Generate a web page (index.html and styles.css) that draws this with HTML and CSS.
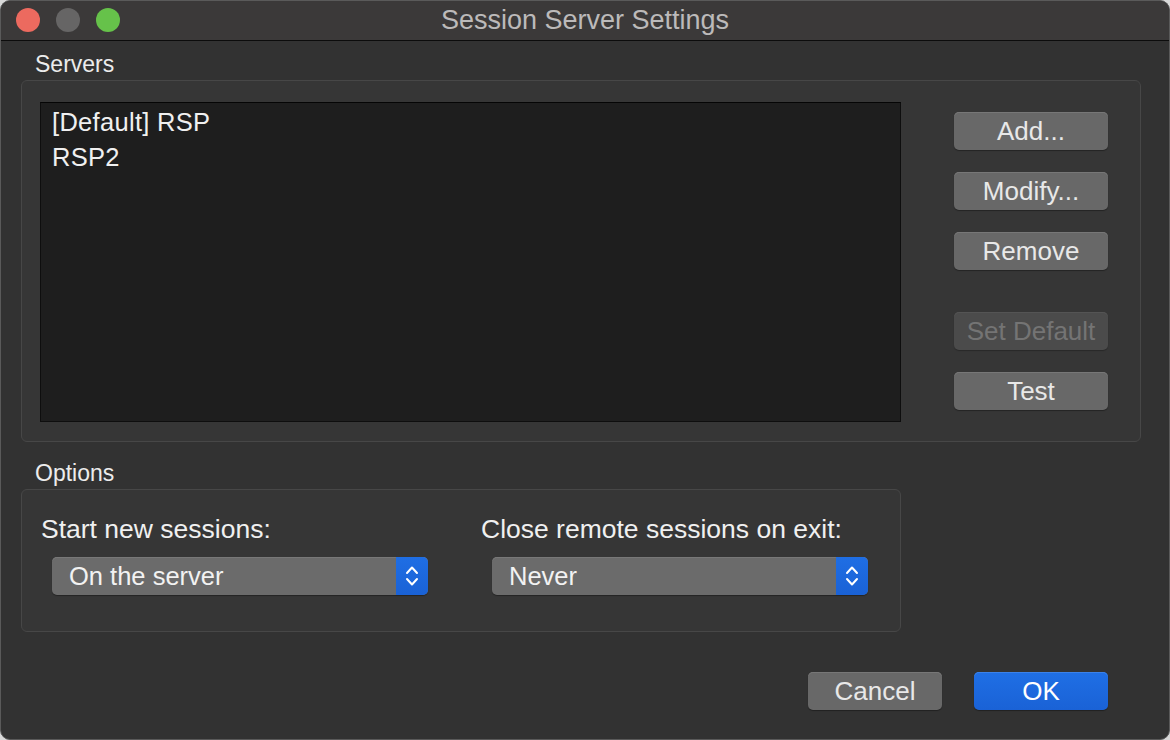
FILE: index.html
```html
<!DOCTYPE html>
<html>
<head>
<meta charset="utf-8">
<title>Session Server Settings</title>
<link rel="stylesheet" href="styles.css">
</head>
<body>
<div class="window">
  <div class="titlebar">
    <div class="lights">
      <span class="light red"></span>
      <span class="light grey"></span>
      <span class="light green"></span>
    </div>
    <div class="title">Session Server Settings</div>
    <div></div>
  </div>
  <div class="content">
    <div class="group-label servers-label">Servers</div>
    <div class="group servers">
      <div class="list">
        <div class="row">[Default] RSP</div>
        <div class="row">RSP2</div>
      </div>
      <div class="side-buttons">
        <button class="btn">Add...</button>
        <button class="btn">Modify...</button>
        <button class="btn">Remove</button>
        <button class="btn disabled spaced">Set Default</button>
        <button class="btn">Test</button>
      </div>
    </div>
    <div class="group-label options-label">Options</div>
    <div class="group options">
      <div class="field">
        <div class="field-label">Start new sessions:</div>
        <div class="select">
          <span class="select-text">On the server</span>
          <span class="select-arrows">
            <svg width="14" height="24" viewBox="0 0 14 24"><path d="M2 9 L7 3.5 L12 9 M2 15 L7 20.5 L12 15" fill="none" stroke="#ffffff" stroke-width="2" stroke-linecap="round" stroke-linejoin="round"/></svg>
          </span>
        </div>
      </div>
      <div class="field">
        <div class="field-label">Close remote sessions on exit:</div>
        <div class="select">
          <span class="select-text">Never</span>
          <span class="select-arrows">
            <svg width="14" height="24" viewBox="0 0 14 24"><path d="M2 9 L7 3.5 L12 9 M2 15 L7 20.5 L12 15" fill="none" stroke="#ffffff" stroke-width="2" stroke-linecap="round" stroke-linejoin="round"/></svg>
          </span>
        </div>
      </div>
    </div>
    <div class="footer">
      <button class="btn wide">Cancel</button>
      <button class="btn wide primary">OK</button>
    </div>
  </div>
</div>
</body>
</html>
```
FILE: styles.css
```css
html, body {
  margin: 0;
  padding: 0;
  background: #d8d8d8;
}
body {
  font-family: "Liberation Sans", Arial, sans-serif;
}
.window {
  width: 1170px;
  height: 740px;
  box-sizing: border-box;
  border: 1px solid #5a5a5a;
  border-radius: 10px;
  overflow: hidden;
  background: #323232;
  display: flex;
  flex-direction: column;
}
.titlebar {
  height: 39px;
  background: #3b3939;
  border-bottom: 1px solid #0c0c0c;
  display: grid;
  grid-template-columns: 1fr auto 1fr;
  align-items: center;
  flex: none;
}
.lights {
  display: flex;
  gap: 16px;
  padding-left: 15px;
  margin-top: -1px;
}
.light {
  width: 24px;
  height: 24px;
  border-radius: 50%;
  display: block;
}
.red { background: #ec6a5f; }
.grey { background: #666565; }
.green { background: #66c24a; }
.title {
  font-size: 27px;
  line-height: 40px;
  color: #bcbaba;
  margin-top: -1px;
}
.content {
  padding: 0 28px 0 20px;
  flex: 1;
  display: flex;
  flex-direction: column;
}
.group-label {
  font-size: 23px;
  line-height: 26px;
  color: #ececec;
  padding-left: 14px;
}
.servers-label {
  margin-top: 10px;
  margin-bottom: 3px;
}
.options-label {
  margin-top: 18px;
  margin-bottom: 3px;
}
.group {
  border: 1px solid #474747;
  border-radius: 6px;
  background: #363636;
  box-sizing: border-box;
}
.servers {
  height: 362px;
  display: flex;
  padding: 21px 32px 19px 18px;
}
.list {
  flex: 1;
  background: #1e1e1e;
  border: 1px solid #0e0e0e;
  border-top-color: #050505;
  padding-top: 2px;
  box-sizing: border-box;
}
.row {
  font-size: 25.5px;
  line-height: 35px;
  color: #f0f0f0;
  padding-left: 11px;
  letter-spacing: 0.3px;
}
.side-buttons {
  width: 154px;
  margin-left: 53px;
  padding-top: 10px;
  display: flex;
  flex-direction: column;
  gap: 22px;
}
.btn {
  font-family: "Liberation Sans", Arial, sans-serif;
  font-size: 26px;
  height: 38px;
  width: 154px;
  padding: 0;
  border: none;
  border-radius: 5px;
  background: #686868;
  color: #e8e8e8;
  box-shadow: inset 0 1px 0 #777777, 0 1px 1px rgba(0, 0, 0, 0.35);
  text-align: center;
  line-height: 38px;
}
.btn.spaced {
  margin-top: 20px;
}
.btn.disabled {
  background: #4b4b4b;
  color: #747474;
  box-shadow: inset 0 1px 0 #545454, 0 1px 1px rgba(0, 0, 0, 0.25);
}
.options {
  width: 880px;
  height: 143px;
  display: grid;
  grid-template-columns: 440px 1fr;
  padding: 24px 32px 0 19px;
}
.field-label {
  font-size: 26.5px;
  line-height: 30px;
  color: #f0f0f0;
  white-space: nowrap;
}
.select {
  margin-top: 13px;
  margin-left: 11px;
  width: 376px;
  height: 38px;
  border-radius: 5px;
  background: #6b6b6b;
  display: flex;
  align-items: center;
  overflow: hidden;
  box-shadow: inset 0 1px 0 #787878, 0 1px 1px rgba(0, 0, 0, 0.35);
}
.select-text {
  flex: 1;
  font-size: 25.5px;
  color: #f2f2f2;
  padding-left: 17px;
}
.select-arrows {
  width: 32px;
  height: 38px;
  background: linear-gradient(#1f6ee4, #1a62d6);
  display: flex;
  align-items: center;
  justify-content: center;
}
.select-arrows svg {
  display: block;
}
.footer {
  margin-top: 40px;
  display: flex;
  justify-content: flex-end;
  gap: 32px;
  padding-right: 33px;
}
.btn.wide {
  width: 134px;
}
.btn.primary {
  background: linear-gradient(#1f6fe5, #1a62d6);
  color: #ffffff;
  box-shadow: inset 0 1px 0 #3b82ea, 0 1px 1px rgba(0, 0, 0, 0.35);
}
```
